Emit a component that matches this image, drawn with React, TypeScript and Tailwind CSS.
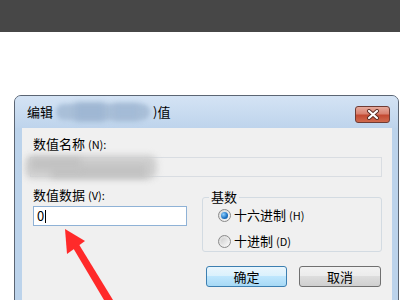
import React from "react";

const font = { fontFamily: '"Noto Sans CJK SC", "Noto Sans", sans-serif' };

function Radio({ checked }: { checked?: boolean }) {
  return (
    <span className="relative flex h-[13px] w-[13px] items-center justify-center rounded-full border border-[#8a8a8a] bg-[linear-gradient(135deg,#d8d8d8,#f8f8f8)]">
      {checked ? (
        <span className="h-[7px] w-[7px] rounded-full bg-[radial-gradient(circle_at_35%_35%,#8fd0ff,#1a6fc0_60%,#0b4f96)]" />
      ) : (
        <span className="h-[7px] w-[7px] rounded-full bg-[linear-gradient(135deg,#cfcfcf,#f4f4f4)]" />
      )}
    </span>
  );
}

export default function App() {
  return (
    <div className="relative h-[300px] w-[400px] overflow-hidden bg-white" style={font}>
      <div className="h-[32px] bg-[#474747]" />
      <div className="ml-[14px] mt-[63px] w-[385px] rounded-t-[7px] border border-[#5b6573] bg-[#bcd3eb]">
        {/* title bar */}
        <div className="flex h-[32px] rounded-t-[6px] bg-[linear-gradient(to_bottom,#d4e3f4,#bed4ec)]">
          <div className="flex items-center pl-[12px] text-[13px] leading-[16px] text-black">
            <span>编辑</span>
            <span className="relative mx-[2px] h-[18px] w-[96px]">
              <span className="absolute left-[1px] top-[1px] h-[16px] w-[94px] rounded-full bg-[#a9bfd8] blur-[2px]" />
              <span className="absolute left-[20px] top-[0px] h-[18px] w-[30px] bg-[#9fb7d3] blur-[3px]" />
              <span className="absolute left-[58px] top-[1px] h-[16px] w-[26px] bg-[#a4bbd6] blur-[3px]" />
            </span>
            <span>)值</span>
          </div>
          <div className="ml-auto mr-[8px] mt-[10px] flex h-[17px] w-[35px] items-center justify-center rounded-[3px] border border-[#6f3b33] bg-[linear-gradient(to_bottom,#e6aa9c,#d98270_45%,#c34a32_55%,#d06a4e)]">
            <svg width="14" height="11" viewBox="0 0 14 11">
              <path d="M3 2 L11 9 M11 2 L3 9" stroke="#5a2a22" strokeWidth="4" strokeLinecap="round" />
              <path d="M3 2 L11 9 M11 2 L3 9" stroke="#ffffff" strokeWidth="2.2" strokeLinecap="round" />
            </svg>
          </div>
        </div>
        {/* body */}
        <div className="pl-[7px] pr-[6px]">
          <div className="h-[200px] bg-[#f0f0f0] pt-[8px] text-[13px] leading-[16px] text-black">
            <div className="pl-[11px]">
              数值名称 <span className="text-[11px]">(N):</span>
            </div>
            <div className="relative ml-[8px] mt-[5px] h-[20px] w-[352px] border border-[#d9dde2] bg-[#f0f0f0]">
              <span className="absolute -left-[6px] -top-[3px] h-[24px] w-[132px] rounded-[8px] bg-[#cfcfcf] blur-[3px]" />
              <span className="absolute left-[20px] top-[6px] h-[14px] w-[96px] bg-[#c3c3c3] blur-[3px]" />
              <span className="absolute left-[0px] top-[0px] h-[12px] w-[50px] bg-[#c2c2c2] blur-[3px]" />
            </div>
            <div className="mt-[10px] flex">
              <div className="ml-[11px] w-[154px]">
                <div>
                  数值数据 <span className="text-[11px]">(V):</span>
                </div>
                <div className="mt-[3px] flex h-[20px] items-center border border-[#8fb2d6] bg-white pl-[3px]">
                  <span>0</span>
                  <span className="ml-[1px] h-[13px] w-[1px] bg-black" />
                </div>
              </div>
              <fieldset className="ml-[15px] mt-[2px] h-[63px] w-[180px] rounded-[3px] border border-[#d3dbe2]">
                <legend className="ml-[6px] px-[2px] text-[13px] leading-[16px]">基数</legend>
                <div className="mt-[2px] flex h-[16px] items-center pl-[15px]">
                  <Radio checked />
                  <span className="ml-[3px]">
                    十六进制 <span className="text-[11px]">(H)</span>
                  </span>
                </div>
                <div className="mt-[10px] flex h-[16px] items-center pl-[15px]">
                  <Radio />
                  <span className="ml-[3px]">
                    十进制 <span className="text-[11px]">(D)</span>
                  </span>
                </div>
              </fieldset>
            </div>
            <div className="mt-[14px] flex justify-end gap-[12px] pr-[11px]">
              <div className="flex h-[21px] w-[81px] items-center justify-center rounded-[3px] border border-[#3c7fb1] bg-[linear-gradient(to_bottom,#eaf6fd,#d9f0fc_50%,#bee6fd_50%,#a7d9f5)]">
                确定
              </div>
              <div className="flex h-[21px] w-[82px] items-center justify-center rounded-[3px] border border-[#707070] bg-[linear-gradient(to_bottom,#f2f2f2,#ebebeb_50%,#dddddd_50%,#cfcfcf)]">
                取消
              </div>
            </div>
          </div>
        </div>
      </div>
      {/* red arrow annotation */}
      <svg className="absolute left-0 top-0" width="400" height="300" viewBox="0 0 400 300">
        <polygon points="65,229 85,241 67,254" fill="#ff2a2a" />
        <polygon points="72.5,247 79,244.5 113,300 104,300" fill="#ff2a2a" />
      </svg>
    </div>
  );
}
